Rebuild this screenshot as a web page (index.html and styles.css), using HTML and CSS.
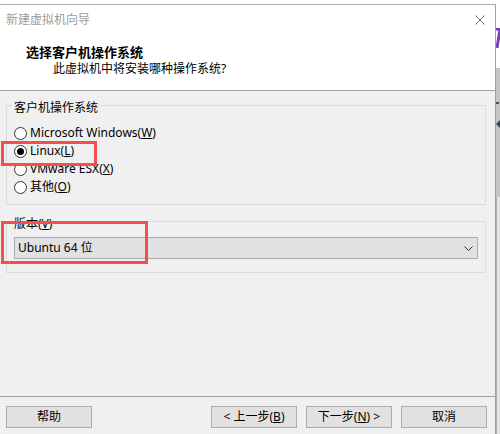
FILE: index.html
```html
<!DOCTYPE html>
<html lang="zh-CN">
<head>
<meta charset="utf-8">
<title>新建虚拟机向导</title>
<link rel="stylesheet" href="styles.css">
</head>
<body>
<div class="screen">
  <div class="window">
    <div class="head">
      <div class="titlebar">
        <span class="title">新建虚拟机向导</span>
        <svg class="close" width="10" height="10" viewBox="0 0 10 10"><path d="M0.5 0.5 L9.5 9.5 M9.5 0.5 L0.5 9.5" stroke="#6b6b6b" stroke-width="1" fill="none"/></svg>
      </div>
      <div class="heading">选择客户机操作系统</div>
      <div class="sub">此虚拟机中将安装哪种操作系统?</div>
    </div>
    <div class="body">
      <fieldset class="group os">
        <legend>客户机操作系统</legend>
        <div class="opt"><span class="radio"></span><span>Microsoft Windows(<u>W</u>)</span></div>
        <div class="opt"><span class="radio on"></span><span>Linux(<u>L</u>)</span></div>
        <div class="opt"><span class="radio"></span><span>VMware ESX(<u>X</u>)</span></div>
        <div class="opt"><span class="radio"></span><span>其他(<u>O</u>)</span></div>
      </fieldset>
      <fieldset class="group ver">
        <legend>版本(<u>V</u>)</legend>
        <div class="combo">
          <span>Ubuntu 64 位</span>
          <svg width="9" height="5" viewBox="0 0 9 5"><polyline points="0.5,0.5 4.5,4.5 8.5,0.5" stroke="#333" stroke-width="1" fill="none"/></svg>
        </div>
      </fieldset>
    </div>
    <div class="footer">
      <div class="btn">帮助</div>
      <div class="btn back">&lt; 上一步(<u>B</u>)</div>
      <div class="btn next">下一步(<u>N</u>) &gt;</div>
      <div class="btn cancel">取消</div>
    </div>
  </div>
  <div class="edge">
    <div class="seg white1"></div>
    <div class="seg purple"><svg width="4" height="20" viewBox="0 0 4 20"><path d="M0 1 H4 M4 1 L1 20" stroke="#7b3db8" stroke-width="3" fill="none"/></svg></div>
    <div class="seg white2"></div>
    <div class="seg gray">
      <span class="dash"></span>
      <span class="tri"></span>
    </div>
    <div class="seg light"></div>
  </div>
  <div class="mark mark1"></div>
  <div class="mark mark2"></div>
</div>
</body>
</html>
```

FILE: styles.css
```css
* { box-sizing: border-box; }
html, body { margin: 0; padding: 0; }
body {
  width: 500px;
  height: 434px;
  overflow: hidden;
  background: #fff;
  font-family: "Noto Sans", "Noto Sans CJK SC", sans-serif;
  font-size: 12px;
  color: #000;
}
u { text-decoration: underline; text-underline-offset: 1px; }

.screen {
  position: relative;
  display: flex;
  padding-top: 4px;
  height: 434px;
}
.window {
  width: 496px;
  height: 430px;
  border-top: 1px solid #ababab;
  border-right: 1px solid #a0a0a0;
  background: #f0f0f0;
  display: flex;
  flex-direction: column;
}
.head {
  height: 86px;
  background: #fff;
  border-bottom: 1px solid #a0a0a0;
}
.titlebar {
  height: 30px;
  display: flex;
  align-items: center;
  justify-content: space-between;
  padding: 0 10px 0 6px;
}
.title { color: #9b9b9b; line-height: 16px; }
.close { display: block; margin-top: -1px; }
.heading {
  font-weight: bold;
  font-size: 13px;
  line-height: 16px;
  padding-left: 26px;
  margin-top: 9px;
}
.sub {
  line-height: 16px;
  padding-left: 53px;
  margin-top: 1px;
}

.body {
  flex: 1;
  padding: 4px 0 0 6px;
}
.group {
  margin: 0;
  min-width: 0;
  width: 480px;
  border: 1px solid #dcdcdc;
  padding: 0 0 0 7px;
}
.group legend {
  padding: 6px 2px 0 2px;
  margin-left: -2px;
  line-height: 14px;
}
.os { height: 110px; padding-top: 9px; }
.ver { height: 62px; margin-top: 6px; padding-top: 6px; }

.opt {
  display: flex;
  align-items: center;
  gap: 3px;
  height: 18px;
  line-height: 16px;
}
.radio {
  width: 13px;
  height: 13px;
  border: 1px solid #333;
  border-radius: 50%;
  background: #fff;
  display: flex;
  align-items: center;
  justify-content: center;
  flex: none;
}
.radio.on::after {
  content: "";
  width: 7px;
  height: 7px;
  border-radius: 50%;
  background: #000;
}

.combo {
  height: 22px;
  margin-right: 7px;
  border: 1px solid #adadad;
  background: #e1e1e1;
  display: flex;
  align-items: center;
  justify-content: space-between;
  padding: 0 4px 0 3px;
  line-height: 16px;
}
.combo svg { display: block; }

.footer {
  height: 38px;
  border-top: 1px solid #a0a0a0;
  display: flex;
  align-items: flex-start;
  padding: 9px 8px 0 6px;
}
.btn {
  width: 86px;
  height: 22px;
  border: 1px solid #adadad;
  background: #e1e1e1;
  display: flex;
  align-items: center;
  justify-content: center;
  line-height: 16px;
}
.back { margin-left: auto; }
.next { margin-left: 9px; }
.cancel { margin-left: 9px; }

.edge {
  width: 4px;
  display: flex;
  flex-direction: column;
}
.seg { flex: none; }
.white1 { height: 24px; background: #fff; }
.purple { height: 20px; background: #fff; }
.purple svg { display: block; }
.white2 { height: 20px; background: #fff; }
.gray {
  height: 129px;
  background: #c4c4c4;
  display: flex;
  flex-direction: column;
  align-items: flex-start;
}
.dash { width: 3px; height: 2px; background: #4a5360; margin-top: 34px; }
.tri {
  width: 0; height: 0;
  border-top: 4px solid transparent;
  border-bottom: 4px solid transparent;
  border-right: 4px solid #3f4956;
  margin-top: 16px;
}
.light { flex: 1; background: #e3e3e3; border-left: 1px solid #b0b0b0; }

.mark {
  position: absolute;
  border: 3px solid #f2504f;
}
.mark1 { left: 1px; top: 141px; width: 96px; height: 25px; }
.mark2 { left: 1px; top: 221px; width: 147px; height: 43px; }
```
